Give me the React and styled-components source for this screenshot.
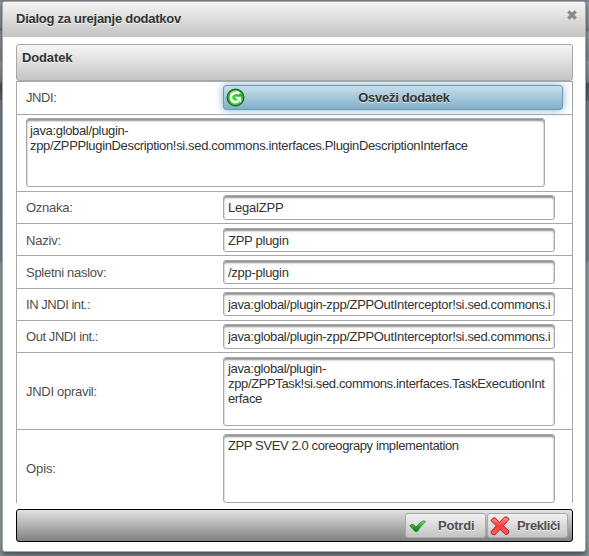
import React from "react";
import styled, { createGlobalStyle } from "styled-components";

const Global = createGlobalStyle`
  * { box-sizing: border-box; }
  html, body { margin: 0; height: 100%; overflow: hidden; }
  body, input, textarea, button {
    font-family: "Liberation Sans", Arial, sans-serif;
    font-size: 13px;
  }
`;

const Page = styled.div`
  width: 589px;
  height: 556px;
  padding: 1px 3px 4px 2px;
  overflow: hidden;
  background: linear-gradient(#7d858d 0 2px, #97a0a8 2px, #89929a 28px, #687179 29px, #97a0a7 32px, #858e96 60px, #99a2a9 62px, #808990 82px, #50585e 84px, #646d74 100px, #7d8791 101px, #7d8791 160px, #808c98 261px, #9aa6ac 263px, #9aa8ae 540px, #809094);
`;

const Dialog = styled.section`
  width: 584px;
  height: 551px;
  border: 1px solid #a8a8a8;
  border-radius: 3px;
  background: #fff;
  box-shadow: 0 2px 5px rgba(0, 0, 0, 0.6);
  display: flex;
  flex-direction: column;
`;

const TitleBar = styled.header`
  height: 35px;
  flex: none;
  display: flex;
  justify-content: space-between;
  padding: 9px 8px 0 13px;
  border-radius: 2px 2px 0 0;
  background: linear-gradient(#f4f4f4, #c4c4c4);
  color: #333;
  font-weight: bold;
  line-height: 16px;
  letter-spacing: -0.26px;
  text-shadow: 0 1px 0 rgba(255, 255, 255, 0.7);
`;

const CloseIcon = styled.svg`
  width: 10px;
  height: 10px;
  margin-top: -1px;
`;

const Content = styled.div`
  padding: 7px 12px 0 13px;
`;

const PanelHeader = styled.div`
  height: 37px;
  padding: 5px 5px 0;
  border: 1px solid #a8a8a8;
  border-radius: 3px;
  background: linear-gradient(#f6f6f6, #c4c4c4);
  color: #333;
  font-weight: bold;
  line-height: 16px;
  letter-spacing: -0.14px;
  text-shadow: 0 1px 0 rgba(255, 255, 255, 0.7);
`;

const Form = styled.div`
  height: 422px;
  overflow: hidden;
  border: 1px solid #a8a8a8;
  border-top: 0;
  border-bottom: 0;
`;

const Row = styled.div`
  height: ${(p) => p.$h}px;
  padding: ${(p) => p.$top}px 0 0 9px;
  border-top: 1px solid #a8a8a8;
  display: grid;
  grid-template-columns: ${(p) => (p.$wide ? "519px" : "197px 340px")};
  align-items: start;
`;

const Label = styled.label`
  height: ${(p) => p.$h}px;
  display: flex;
  align-items: center;
  color: #4f4f4f;
  letter-spacing: ${(p) => p.$track || 0}px;
`;

const field = `
  display: block;
  margin: 0;
  border: 1px solid #a8a8a8;
  border-radius: 3px;
  outline: none;
  background: #fff;
  color: #333;
  box-shadow: inset 0 2px 2px #8f8f8f;
`;

const TextInput = styled.input`
  ${field}
  width: 332px;
  height: ${(p) => p.$h}px;
  padding: 0 3px ${(p) => (p.$h === 25 ? 1 : 0)}px 4px;
  letter-spacing: ${(p) => p.$track || 0}px;
`;

const TextArea = styled.textarea`
  ${field}
  width: ${(p) => (p.$wide ? 519 : 332)}px;
  height: 69px;
  padding: ${(p) => (p.$wide ? "4px 4px 0 3px" : "3px 3px 0 4px")};
  line-height: 15px;
  letter-spacing: ${(p) => p.$track || 0}px;
  resize: none;
  overflow: hidden;
`;

const RefreshButton = styled.button`
  width: 340px;
  height: 25px;
  padding: 0 0 0 2px;
  display: flex;
  align-items: center;
  border: 1px solid #6a9ab5;
  border-radius: 3px;
  background: linear-gradient(#c9dee9, #82b0ca);
  box-shadow: 0 0 8px #85b2cb;
  color: #333;
  font-weight: bold;
  letter-spacing: -0.28px;
  text-shadow: 0 1px 0 rgba(255, 255, 255, 0.7);
`;

const ButtonText = styled.span`
  flex: 1;
  text-align: center;
  padding-left: 1px;
`;

const Footer = styled.footer`
  height: 33px;
  margin: 6px 12px 0 13px;
  padding: 3px 4px 0;
  display: flex;
  justify-content: flex-end;
  gap: 1px;
  border: 1px solid #000;
  border-radius: 3px;
  background: linear-gradient(#e2e2e2, #808080);
`;

const ActionButton = styled.button`
  width: 81px;
  height: 25px;
  padding: 0 0 0 ${(p) => p.$pad}px;
  display: flex;
  align-items: center;
  gap: ${(p) => p.$gap}px;
  border: 1px solid #a8a8a8;
  border-radius: 3px;
  background: linear-gradient(#f2f2f2, #c4c4c4);
  color: #4f4f4f;
  font-weight: bold;
  letter-spacing: ${(p) => p.$track || 0}px;
  text-shadow: 0 1px 0 rgba(255, 255, 255, 0.7);
`;

const Icon = styled.svg`
  flex: none;
  display: block;
`;

const RefreshIcon = () => (
  <Icon width="19" height="19" viewBox="0 0 19 19">
    <defs>
      <radialGradient id="green" cx="50%" cy="75%" r="70%">
        <stop offset="0" stopColor="#39ef35" />
        <stop offset="1" stopColor="#0fa811" />
      </radialGradient>
    </defs>
    <circle cx="9.5" cy="9.5" r="8.4" fill="url(#green)" stroke="#16651a" strokeWidth="1.2" />
    <path d="M3.7 6Q9.5 -.8 15.3 6" fill="none" stroke="#7edc7a" strokeWidth="1.2" />
    <path d="M13.4 5.6C9.9 3.3 4.9 5.6 4.9 9.6C4.9 13.5 9.5 15.4 12.6 12.9" fill="none" stroke="#fff" strokeWidth="2.7" />
    <path d="M8.4 8.8H15.2V14.8L13 12.8L10.8 13.3L11.5 11.3Z" fill="#fff" />
  </Icon>
);

const CheckIcon = () => (
  <Icon width="17" height="14" viewBox="0 0 17 14">
    <defs>
      <linearGradient id="check" x2="0" y2="1">
        <stop stopColor="#9ae08f" />
        <stop offset=".5" stopColor="#28ab25" />
        <stop offset="1" stopColor="#087d08" />
      </linearGradient>
    </defs>
    <path d="M.8 6.7Q2.8 4.5 4.6 5.8L7 8.1Q10.7 3.2 14 2Q16.3 1.4 16.3 3.1Q12 6.3 8.7 12Q7 13.4 5.6 11.9Z" fill="url(#check)" stroke="#238026" strokeWidth=".8" />
  </Icon>
);

const CancelIcon = () => (
  <Icon width="20" height="20" viewBox="0 0 20 20">
    <defs>
      <linearGradient id="cancel" x2="0" y2="1">
        <stop stopColor="#ff9390" />
        <stop offset=".5" stopColor="#f33d40" />
        <stop offset="1" stopColor="#f96262" />
      </linearGradient>
    </defs>
    <path d="M1 4.7Q2.5 1.3 5 1.8L9.5 6.2L14.8 1Q18.6.3 18.9 3.4L13.4 9.7L19.2 15.4Q18.7 18.2 16 18.7L10 13.4L4.8 18.9Q1.3 18.9 1 15.8L6.3 9.8Z" fill="url(#cancel)" stroke="#b71920" strokeWidth="1" strokeLinejoin="round" />
  </Icon>
);

const fields = [
  { label: "Oznaka:", labelTrack: -0.25, value: "LegalZPP", track: -0.22, h: 32, top: 3, fieldH: 25 },
  { label: "Naziv:", labelTrack: -0.2, value: "ZPP plugin", track: -0.27, h: 32, top: 4, fieldH: 24 },
  { label: "Spletni naslov:", labelTrack: -0.28, value: "/zpp-plugin", track: -0.27, h: 33, top: 4, fieldH: 24 },
  { label: "IN JNDI int.:", labelTrack: -0.46, value: "java:global/plugin-zpp/ZPPOutInterceptor!si.sed.commons.i", track: -0.34, h: 32, top: 3, fieldH: 24 },
  { label: "Out JNDI int.:", labelTrack: -0.43, value: "java:global/plugin-zpp/ZPPOutInterceptor!si.sed.commons.i", track: -0.34, h: 32, top: 3, fieldH: 25 },
];

export default function App() {
  return (
    <Page>
      <Global />
      <Dialog>
        <TitleBar>
          Dialog za urejanje dodatkov
          <CloseIcon viewBox="0 0 9 9">
            <path d="M1.2 1.2L7.8 7.8M7.8 1.2L1.2 7.8" stroke="#888" strokeWidth="3" />
          </CloseIcon>
        </TitleBar>
        <Content>
          <PanelHeader>Dodatek</PanelHeader>
          <Form>
            <Row $h={33} $top={3}>
              <Label $h={25} $track={-0.4}>JNDI:</Label>
              <RefreshButton>
                <RefreshIcon />
                <ButtonText>Osveži dodatek</ButtonText>
              </RefreshButton>
            </Row>
            <Row $h={77} $top={3} $wide>
              <TextArea $wide $track={-0.34} readOnly spellCheck={false} value="java:global/plugin-zpp/ZPPPluginDescription!si.sed.commons.interfaces.PluginDescriptionInterface" />
            </Row>
            {fields.map((f) => (
              <Row key={f.label} $h={f.h} $top={f.top}>
                <Label $h={f.fieldH} $track={f.labelTrack}>{f.label}</Label>
                <TextInput $h={f.fieldH} $track={f.track} readOnly value={f.value} />
              </Row>
            ))}
            <Row $h={77} $top={4}>
              <Label $h={69} $track={-0.28}>JNDI opravil:</Label>
              <TextArea $track={-0.36} readOnly spellCheck={false} value="java:global/plugin-zpp/ZPPTask!si.sed.commons.interfaces.TaskExecutionInterface" />
            </Row>
            <Row $h={77} $top={4}>
              <Label $h={69} $track={-0.1}>Opis:</Label>
              <TextArea $track={-0.39} readOnly spellCheck={false} value="ZPP SVEV 2.0 coreograpy implementation" />
            </Row>
          </Form>
        </Content>
        <Footer>
          <ActionButton $pad={3} $gap={12} $track={-0.2}>
            <CheckIcon />
            Potrdi
          </ActionButton>
          <ActionButton $pad={2} $gap={7} $track={-0.4}>
            <CancelIcon />
            Prekliči
          </ActionButton>
        </Footer>
      </Dialog>
    </Page>
  );
}
